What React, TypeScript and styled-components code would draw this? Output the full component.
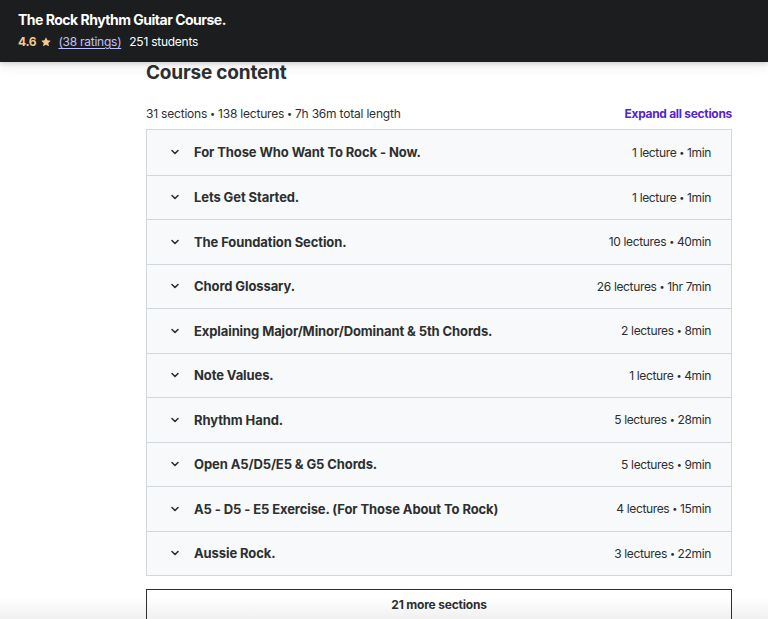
import React from "react";
import styled, { createGlobalStyle } from "styled-components";

const Global = createGlobalStyle`
  html, body { margin: 0; padding: 0; background: #fff; }
  body { font-family: Inter, "Noto Sans", sans-serif; color: #2d2f31; -webkit-font-smoothing: antialiased; }
  * { box-sizing: border-box; }
`;

const Page = styled.div`
  width: 768px;
  height: 619px;
  overflow: hidden;
  position: relative;
  background: #fff;
`;

const Header = styled.header`
  height: 62px;
  background: #1c1d1f;
  padding: 11px 18px 0;
  display: flex;
  flex-direction: column;
  gap: 5px;
  box-shadow: 0 2px 4px rgba(0, 0, 0, 0.12), 0 4px 12px rgba(0, 0, 0, 0.08);
  position: relative;
  z-index: 2;
`;

const Title = styled.h1`
  margin: 0;
  color: #fff;
  font-size: 14px;
  font-weight: 700;
  line-height: 18px;
  letter-spacing: -0.5px;
`;

const RatingRow = styled.div`
  display: flex;
  align-items: center;
  gap: 4px;
  font-size: 12px;
  line-height: 16px;
  color: #fff;
  letter-spacing: -0.25px;
`;

const Score = styled.span`
  color: #f3ca8c;
  font-weight: 700;
`;

const Ratings = styled.span`
  color: #c0c4fc;
  text-decoration: underline;
  text-underline-offset: 2px;
  margin-left: 2px;
  margin-right: 4px;
`;

const Main = styled.main`
  width: 586px;
  margin-left: 146px;
  display: flex;
  flex-direction: column;
`;

const Heading = styled.h2`
  margin: 0;
  font-size: 19px;
  font-weight: 700;
  line-height: 22px;
  letter-spacing: -0.2px;
  color: #2d2f31;
`;

const StatsBar = styled.div`
  display: flex;
  justify-content: space-between;
  align-items: center;
  margin-top: 21px;
  height: 16px;
  font-size: 12px;
`;

const Stats = styled.span`
  color: #2d2f31;
  letter-spacing: -0.2px;
`;

const Expand = styled.span`
  color: #5624d0;
  font-weight: 700;
  letter-spacing: -0.3px;
`;

const List = styled.div`
  margin-top: 8px;
  border: 1px solid #d1d7dc;
  display: flex;
  flex-direction: column;
`;

const Row = styled.div`
  height: 44.5px;
  background: #f7f9fa;
  display: flex;
  align-items: center;
  padding: 0 20px 0 23px;
  & + & { border-top: 1px solid #d1d7dc; }
`;

const Chevron = styled.svg`
  width: 10px;
  height: 10px;
  flex-shrink: 0;
  margin-right: 14px;
`;

const SectionTitle = styled.span`
  flex: 1;
  font-size: 13px;
  font-weight: 700;
  color: #2d2f31;
  letter-spacing: -0.1px;
`;

const Meta = styled.span`
  font-size: 12px;
  color: #2d2f31;
  letter-spacing: -0.35px;
`;

const Dot = styled.span`
  font-size: 9px;
  margin: 0 3px;
  vertical-align: 1px;
`;

const MoreButton = styled.button`
  margin-top: 13px;
  height: 34px;
  border: 1px solid #2d2f31;
  background: #fff;
  font-family: inherit;
  font-size: 12px;
  font-weight: 700;
  letter-spacing: -0.2px;
  color: #2d2f31;
  padding: 0 0 4px;
  width: 100%;
`;

const BottomFade = styled.div`
  position: absolute;
  left: 0;
  right: 0;
  bottom: 0;
  height: 22px;
  background: linear-gradient(to bottom, rgba(0, 0, 0, 0), rgba(0, 0, 0, 0.06));
  pointer-events: none;
`;

const sections: [string, string, string][] = [
  ["For Those Who Want To Rock - Now.", "1 lecture", "1min"],
  ["Lets Get Started.", "1 lecture", "1min"],
  ["The Foundation Section.", "10 lectures", "40min"],
  ["Chord Glossary.", "26 lectures", "1hr 7min"],
  ["Explaining Major/Minor/Dominant & 5th Chords.", "2 lectures", "8min"],
  ["Note Values.", "1 lecture", "4min"],
  ["Rhythm Hand.", "5 lectures", "28min"],
  ["Open A5/D5/E5 & G5 Chords.", "5 lectures", "9min"],
  ["A5 - D5 - E5 Exercise. (For Those About To Rock)", "4 lectures", "15min"],
  ["Aussie Rock.", "3 lectures", "22min"],
];

export default function App() {
  return (
    <Page>
      <Global />
      <Header>
        <Title>The Rock Rhythm Guitar Course.</Title>
        <RatingRow>
          <Score>4.6</Score>
          <svg width="12" height="12" viewBox="0 0 24 24">
            <path
              fill="#f3ca8c"
              d="M12 2.5l2.9 6.1 6.6.8-4.9 4.6 1.3 6.6L12 17.3l-5.9 3.3 1.3-6.6-4.9-4.6 6.6-.8z"
            />
          </svg>
          <Ratings>(38 ratings)</Ratings>
          <span>251 students</span>
        </RatingRow>
      </Header>
      <Main>
        <Heading>Course content</Heading>
        <StatsBar>
          <Stats>
            31 sections<Dot>•</Dot>138 lectures<Dot>•</Dot>7h 36m total length
          </Stats>
          <Expand>Expand all sections</Expand>
        </StatsBar>
        <List>
          {sections.map(([t, l, d]) => (
            <Row key={t}>
              <Chevron viewBox="0 0 10 10">
                <path d="M2 3.5 L5 6.5 L8 3.5" fill="none" stroke="#2d2f31" strokeWidth="1.6" strokeLinecap="round" strokeLinejoin="round" />
              </Chevron>
              <SectionTitle>{t}</SectionTitle>
              <Meta>
                {l}
                <Dot>•</Dot>
                {d}
              </Meta>
            </Row>
          ))}
        </List>
        <MoreButton>21 more sections</MoreButton>
      </Main>
      <BottomFade />
    </Page>
  );
}
